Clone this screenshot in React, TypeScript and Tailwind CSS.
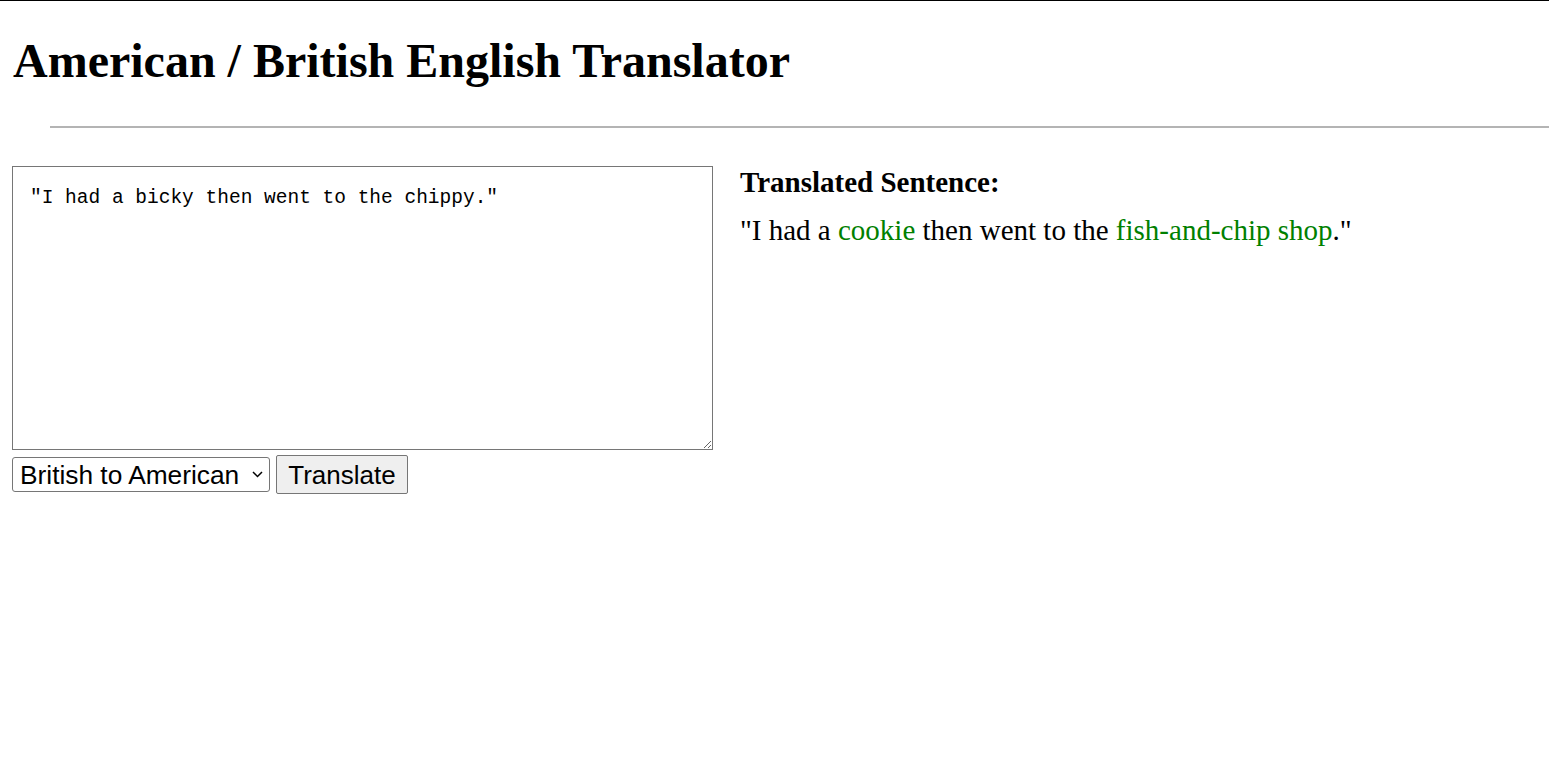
import React from "react";

export default function App() {
  return (
    <div className="min-h-screen bg-white border-t border-black text-black font-['Liberation_Serif','Times_New_Roman',serif]">
      <h1 className="pl-[13px] pt-[34px] text-[48px] font-bold leading-[52px]">
        American / British English Translator
      </h1>
      <div className="ml-[50px] mt-[39px] h-[2px] bg-[#b4b4b4]" />
      <div className="flex px-[12px] pt-[38px]">
        <div className="w-[701px] shrink-0">
          <textarea
            className="block w-[701px] h-[284px] border border-[#767676] pl-[17px] pt-[19px] pr-[10px] text-[19.5px] leading-[24px] font-['Liberation_Mono','Courier_New',monospace] resize-y outline-none"
            defaultValue={'"I had a bicky then went to the chippy."'}
          />
          <div className="flex items-center gap-[6px] mt-[5px] font-['Liberation_Sans',Arial,sans-serif]">
            <div className="relative">
              <select className="appearance-none w-[258px] h-[35px] border border-[#767676] rounded-[3px] bg-white pl-[7px] pr-[20px] text-[26.3px] leading-[30px]">
                <option>British to American</option>
                <option>American to British</option>
              </select>
              <svg
                className="absolute right-[7px] top-[14px] pointer-events-none"
                width="11"
                height="7"
                viewBox="0 0 11 7"
              >
                <path d="M1 1l4.5 4.5L10 1" fill="none" stroke="#000" strokeWidth="1.5" />
              </svg>
            </div>
            <button className="h-[39px] w-[132px] border border-[#767676] rounded-[2px] bg-[#efefef] text-[26px] leading-[30px]">
              Translate
            </button>
          </div>
        </div>
        <div className="ml-[27px]">
          <div className="text-[29px] font-bold leading-[32px]">Translated Sentence:</div>
          <div className="text-[29px] leading-[32px] mt-[16px]">
            "I had a <span className="text-[#008000]">cookie</span> then went to the{" "}
            <span className="text-[#008000]">fish-and-chip shop</span>."
          </div>
        </div>
      </div>
    </div>
  );
}
